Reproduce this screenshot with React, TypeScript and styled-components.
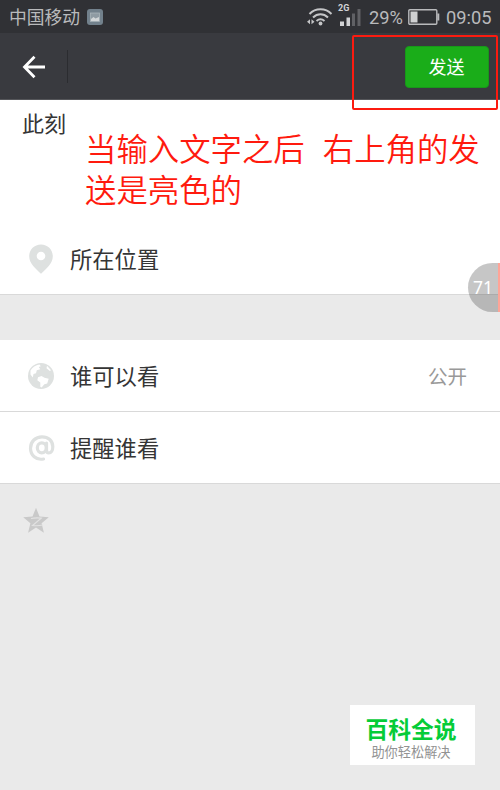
import React from 'react';
import styled, { createGlobalStyle } from 'styled-components';

const GlobalStyle = createGlobalStyle`
  * { box-sizing: border-box; }
  body { margin: 0; background: #eaeaea; font-family: Roboto, "Noto Sans CJK SC", sans-serif; }
  svg { display: block; flex: none; }
`;

const Screen = styled.div`
  position: relative;
  width: 500px;
  height: 790px;
  overflow: hidden;
  background: #eaeaea;
  color: #353535;
`;

const StatusBar = styled.header`
  display: flex;
  align-items: center;
  height: 33px;
  padding: 0 9px;
  background: #303135;
  color: #b9babc;
`;

const Carrier = styled.span`
  margin-right: 7px;
  font-family: "Noto Sans CJK SC", sans-serif;
  font-size: 17.8px;
  line-height: 33px;
`;

const StatusIcons = styled.div`
  display: flex;
  align-items: center;
  margin-left: auto;
`;

const StatusText = styled.span<{ $width: number }>`
  width: ${(p) => p.$width}px;
  padding-top: 2px;
  font-size: 18.3px;
  line-height: 31px;
  white-space: nowrap;
`;

const ActionBar = styled.nav`
  display: flex;
  align-items: center;
  height: 67px;
  padding: 1px 11px 0 22px;
  border-bottom: 1px solid #55565a;
  background: #393a3f;
`;

const Divider = styled.span`
  width: 1px;
  height: 33px;
  margin-left: 20px;
  background: #2b2c30;
`;

const SendButton = styled.button`
  width: 84px;
  height: 42px;
  margin-left: auto;
  padding: 0 1px 1px 0;
  border: 1px solid #18981a;
  border-radius: 4px;
  background: #1aad19;
  color: #fff;
  font-family: "Noto Sans CJK SC", sans-serif;
  font-size: 18px;
  line-height: 38px;
`;

const Composer = styled.section`
  height: 123px;
  padding: 9px 0 0 22px;
  background: #fff;
  font-size: 22px;
  line-height: 32px;
`;

const Row = styled.div<{ $height: number }>`
  display: flex;
  align-items: center;
  height: ${(p) => p.$height}px;
  padding: 0 33px 0 26px;
  border-bottom: 1px solid #d9d9d9;
  background: #fff;
`;

const RowIcon = styled.span`
  width: 30px;
  margin-right: 14px;
`;

const RowLabel = styled.span`
  padding-bottom: 2px;
  font-family: "Noto Sans CJK SC", sans-serif;
  font-size: 22.3px;
  line-height: 32px;
`;

const RowValue = styled.span`
  margin-left: auto;
  color: #999;
  font-family: "Noto Sans CJK SC", sans-serif;
  font-size: 19.5px;
  line-height: 32px;
`;

const Gap = styled.div`
  height: 45px;
`;

const ShareBar = styled.div`
  padding: 23px 0 0 23px;
`;

const Highlight = styled.div`
  position: absolute;
  left: 352px;
  top: 35px;
  width: 146px;
  height: 75px;
  border: 2px solid #fc1b10;
  border-radius: 2px;
`;

const Note = styled.p`
  position: absolute;
  left: 85px;
  top: 127px;
  margin: 0;
  color: #ff1a0e;
  font-family: "Noto Sans CJK SC", sans-serif;
  font-size: 31.4px;
  font-weight: 350;
  line-height: 41px;
  white-space: nowrap;
`;

const NoteGap = styled.span`
  display: inline-block;
  width: 18px;
`;

const FloatingBall = styled.div`
  position: absolute;
  left: 468px;
  top: 263px;
  width: 32px;
  height: 49px;
  padding-left: 5px;
  border-right: 2px solid #ffa497;
  border-radius: 25px 0 0 25px;
  background: rgba(60, 60, 60, 0.29);
  color: #fff;
  font-family: "Noto Sans", sans-serif;
  font-size: 17.5px;
  line-height: 49px;
`;

const Watermark = styled.aside`
  position: absolute;
  left: 350px;
  top: 705px;
  width: 125px;
  height: 60px;
  background: #fff;
  text-align: center;
  font-family: "Noto Sans CJK SC", sans-serif;
`;

const WatermarkTitle = styled.div`
  padding: 10px 3px 0 0;
  color: #05cc38;
  font-size: 22.8px;
  font-weight: 700;
  line-height: 28px;
`;

const WatermarkSub = styled.div`
  padding: 1px 3px 0 0;
  color: #929292;
  font-size: 13.2px;
  line-height: 15px;
`;

const PictureIcon = () => (
  <svg width="16" height="16" viewBox="0 0 16 16">
    <rect width="16" height="16" rx="3" fill="#72818c" />
    <rect x="3.500" y="4" width="9" height="8.500" fill="#8f9ba3" stroke="#a9b3b9" strokeWidth=".8" />
    <path d="M4 10l2.500-2 2 1.500L12 8v4H4z" fill="#d2d6d8" />
  </svg>
);

const WifiIcon = () => (
  <svg width="27" height="20" viewBox="0 0 27 20" fill="none" stroke="#c4c5c7" strokeWidth="2">
    <path d="M2.500 7C8.500.8 18.500.8 24.500 7M6 10.500c4.500-4.200 10.500-4.200 15 0M9.500 14c2.700-2.300 5.300-2.300 8 0" />
    <circle cx="13.500" cy="16.500" r="1.900" fill="#c4c5c7" stroke="none" />
    <path d="M3 12.200v5L0 14.700zM4.500 12.200v5l3-2.500z" fill="#c4c5c7" stroke="none" />
  </svg>
);

const SignalGlyph = styled.span`
  display: grid;
  width: 24px;
  height: 20px;
  margin: -1px 7px 0 4px;
`;

const NetworkType = styled.span`
  grid-area: 1 / 1;
  margin-top: -2px;
  color: #d2d3d5;
  font-size: 9px;
  font-weight: 700;
  line-height: 9px;
`;

const SignalBars = styled.svg`
  grid-area: 1 / 1;
  align-self: end;
`;

const SignalIcon = () => (
  <SignalGlyph>
    <NetworkType>2G</NetworkType>
    <SignalBars width="23" height="17" viewBox="0 0 23 17">
      <rect x="2" y="12.500" width="4" height="4.500" fill="#d2d3d5" />
      <rect x="8.500" y="8.500" width="3.500" height="8.500" fill="#d2d3d5" />
      <rect x="14" y="4.500" width="3" height="12.500" fill="#606165" />
      <rect x="19.500" y="0" width="3" height="17" fill="#606165" />
    </SignalBars>
  </SignalGlyph>
);

const BatteryIcon = () => (
  <svg width="38" height="16" viewBox="0 0 38 16">
    <rect x=".8" y=".8" width="28" height="14.400" rx="1" fill="none" stroke="#b9babc" strokeWidth="1.400" />
    <path d="M29.300 4.500h2v7h-2z" fill="#b9babc" />
    <path d="M2.500 2.500h7v11h-7z" fill="#cfd0d1" />
  </svg>
);

const BackIcon = () => (
  <svg width="25" height="24" viewBox="0 0 25 24" fill="none" stroke="#fff" strokeWidth="2.800">
    <path d="M12.500 1.800L2.500 12l10 10.200M2.500 12H23" />
  </svg>
);

const PinIcon = () => (
  <svg width="30" height="32" viewBox="0 0 30 32">
    <path fillRule="evenodd" fill="#dee1e0" d="M15 1.500C8.300 1.500 3.200 6.700 3.200 13.200c0 7.500 6.800 12.600 11.800 17.600 5-5 11.800-10.100 11.800-17.600C26.800 6.700 21.700 1.500 15 1.500zm0 7.200a4.300 4.300 0 1 1 0 8.600 4.300 4.300 0 0 1 0-8.600z" />
  </svg>
);

const GlobeIcon = () => (
  <svg width="30" height="30" viewBox="0 0 30 30">
    <circle cx="15" cy="15" r="13" fill="#dee1e0" />
    <path fill="#fff" d="M4.500 9.500C6.500 6 9.500 4 13.500 3.500l1.300 1.700-2 .8 1.500 2.300-3.500 1-.8 2.900-2.500.8-.7 3.500-2.300-3zM12 16.300l3.500-1.300 3 1.800 4.200 1-1.500 4.700-2.800.8-2.800 3.200-1.300-.8v-4.200l-3-2.200zM21 4.800l4 4.500-1.200.8-3.300-2.800z" />
  </svg>
);

const AtIcon = () => (
  <svg width="30" height="30" viewBox="0 0 30 30" fill="none" stroke="#dee1e0" strokeLinecap="round" strokeWidth="3.200">
    <path d="M17.500 26C10 27.500 4.500 22 4.500 15.200 4.500 8.500 9.500 3.800 16 3.800c6.300 0 10.800 4 10.800 10 0 4-1.800 6.200-4 6.200-1.700 0-2.300-1.200-2.300-3V10" />
    <ellipse cx="15.800" cy="14.800" rx="4.500" ry="5" />
  </svg>
);

const StarIcon = () => (
  <svg width="26" height="28" viewBox="0 0 26 28">
    <path fill="#c9c9c9" d="M13 .8l3.500 8.700 9.300.7-7.200 6 2.300 9.500-7.900-5.200-7.900 5.200 2.300-9.500-7.200-6 9.300-.7z" />
    <path d="M8 11.500q5-1 10.200-.3L9.500 18.500q5 .7 10.500-.5" fill="none" stroke="#e2e2e2" strokeWidth="1.200" />
  </svg>
);

export default function App() {
  return (
    <>
      <GlobalStyle />
      <Screen>
        <StatusBar>
          <Carrier>中国移动</Carrier>
          <PictureIcon />
          <StatusIcons>
            <WifiIcon />
            <SignalIcon />
            <StatusText $width={39}>29%</StatusText>
            <BatteryIcon />
            <StatusText $width={45}>09:05</StatusText>
          </StatusIcons>
        </StatusBar>
        <ActionBar>
          <BackIcon />
          <Divider />
          <SendButton>发送</SendButton>
        </ActionBar>
        <Composer>此刻</Composer>
        <Row $height={72}>
          <RowIcon><PinIcon /></RowIcon>
          <RowLabel>所在位置</RowLabel>
        </Row>
        <Gap />
        <Row $height={72}>
          <RowIcon><GlobeIcon /></RowIcon>
          <RowLabel>谁可以看</RowLabel>
          <RowValue>公开</RowValue>
        </Row>
        <Row $height={72}>
          <RowIcon><AtIcon /></RowIcon>
          <RowLabel>提醒谁看</RowLabel>
        </Row>
        <ShareBar><StarIcon /></ShareBar>
        <Highlight />
        <Note>当输入文字之后<NoteGap />右上角的发<br />送是亮色的</Note>
        <FloatingBall>71</FloatingBall>
        <Watermark>
          <WatermarkTitle>百科全说</WatermarkTitle>
          <WatermarkSub>助你轻松解决</WatermarkSub>
        </Watermark>
      </Screen>
    </>
  );
}
